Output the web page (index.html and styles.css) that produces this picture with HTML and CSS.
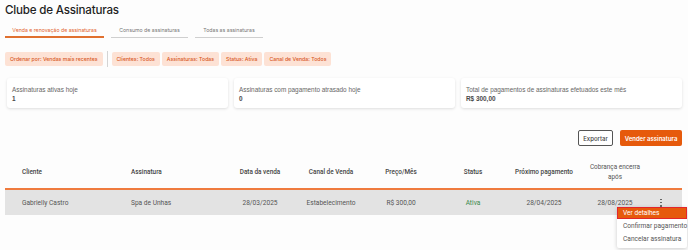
FILE: index.html
```html
<!DOCTYPE html>
<html lang="pt-BR">
<head>
<meta charset="utf-8">
<title>Clube de Assinaturas</title>
<link rel="stylesheet" href="styles.css">
</head>
<body>
<div class="page">
  <h1 class="title">Clube de Assinaturas</h1>

  <nav class="tabs">
    <a class="tab active">Venda e renovação de assinaturas</a>
    <a class="tab tab-2">Consumo de assinaturas</a>
    <a class="tab tab-3">Todas as assinaturas</a>
  </nav>

  <div class="chips">
    <span class="chip chip-sort">Ordenar por: Vendas mais recentes</span>
    <span class="chip-sep"></span>
    <span class="chip">Clientes: Todos</span>
    <span class="chip">Assinaturas: Todas</span>
    <span class="chip">Status: Ativa</span>
    <span class="chip">Canal de Venda: Todos</span>
  </div>

  <div class="cards">
    <div class="card">
      <div class="card-label">Assinaturas ativas hoje</div>
      <div class="card-value">1</div>
    </div>
    <div class="card">
      <div class="card-label">Assinaturas com pagamento atrasado hoje</div>
      <div class="card-value">0</div>
    </div>
    <div class="card">
      <div class="card-label">Total de pagamentos de assinaturas efetuados este mês</div>
      <div class="card-value">R$ 300,00</div>
    </div>
  </div>

  <div class="actions">
    <button class="btn btn-outline">Exportar</button>
    <button class="btn btn-primary">Vender assinatura</button>
  </div>

  <table class="table">
    <colgroup>
      <col class="c-cliente"><col class="c-assin"><col class="c-data"><col class="c-canal">
      <col class="c-preco"><col class="c-status"><col class="c-prox"><col class="c-cob"><col class="c-acao">
    </colgroup>
    <thead>
      <tr>
        <th class="left first">Cliente</th>
        <th class="left second">Assinatura</th>
        <th>Data da venda</th>
        <th>Canal de Venda</th>
        <th>Preço/Mês</th>
        <th>Status</th>
        <th>Próximo pagamento</th>
        <th class="cob">Cobrança encerra após</th>
        <th></th>
      </tr>
    </thead>
    <tbody>
      <tr>
        <td class="left first">Gabrielly Castro</td>
        <td class="left second">Spa de Unhas</td>
        <td>28/03/2025</td>
        <td>Estabelecimento</td>
        <td>R$ 300,00</td>
        <td class="status">Ativa</td>
        <td>28/04/2025</td>
        <td>28/08/2025</td>
        <td class="kebab-cell">
          <span class="kebab"><i></i><i></i><i></i></span>
          <div class="menu">
            <div class="menu-item selected">Ver detalhes</div>
            <div class="menu-item">Confirmar pagamento</div>
            <div class="menu-item">Cancelar assinatura</div>
          </div>
        </td>
      </tr>
    </tbody>
  </table>
</div>
</body>
</html>
```

FILE: styles.css
```css
* { box-sizing: border-box; }
html, body { margin: 0; padding: 0; }
body {
  background: #fdfdfd;
  font-family: "Liberation Sans", Arial, sans-serif;
  color: #333;
  width: 688px;
  height: 250px;
  overflow: hidden;
}
.page {
  padding: 2px 6px 0 5px;
}
.title {
  margin: 0;
  font-family: Inter, "Liberation Sans", sans-serif;
  font-weight: 500;
  font-size: 11.6px;
  letter-spacing: -0.2px;
  line-height: 16px;
  color: #1f1f1f;
}
.tabs {
  display: flex;
  gap: 7px;
  margin-top: 6px;
}
.tab {
  font-family: Inter, "Liberation Sans", sans-serif;
  font-size: 5.2px;
  color: #777;
  text-align: center;
  height: 14px;
  line-height: 13px;
  border-bottom: 1px solid #cfcfcf;
}
.tab.active {
  width: 99px;
  color: #e2622a;
  border-bottom: 2px solid #e0702f;
}
.tab-2 { width: 77px; }
.tab-3 { width: 68px; }

.chips {
  display: flex;
  align-items: center;
  gap: 2px;
  margin-top: 13px;
}
.chip {
  font-family: Inter, "Liberation Sans", sans-serif;
  font-weight: 500;
  font-size: 5.2px;
  color: #d8581f;
  background: #fde2d5;
  border-radius: 2px;
  height: 14px;
  line-height: 14px;
  padding: 0 5px;
  white-space: nowrap;
}
.chip-sep {
  width: 1px;
  height: 16px;
  background: #d4d4d4;
  margin: 0 2px;
}

.cards {
  display: flex;
  gap: 6px;
  margin-top: 11px;
  padding-left: 2px;
}
.card {
  flex: 1;
  height: 30px;
  background: #fff;
  border-radius: 3px;
  box-shadow: 0 1px 3px rgba(0,0,0,0.13);
  padding: 7px 5px 0;
}
.card-label {
  font-size: 6.4px;
  color: #666;
  line-height: 9px;
}
.card-value {
  font-size: 6.4px;
  font-weight: bold;
  color: #4a4a4a;
  line-height: 9px;
}

.actions {
  display: flex;
  justify-content: flex-end;
  gap: 7px;
  margin-top: 22px;
}
.btn {
  font-family: Inter, "Liberation Sans", sans-serif;
  font-size: 6px;
  height: 16px;
  padding: 0;
  border-radius: 2px;
  cursor: pointer;
}
.btn-outline {
  width: 35px;
  background: #fff;
  color: #444;
  border: 1px solid #555;
  font-weight: 500;
}
.btn-primary {
  width: 62px;
  background: #e65a0c;
  color: #fff;
  border: none;
  font-weight: 600;
}

.table {
  width: 677px;
  border-collapse: collapse;
  table-layout: fixed;
  margin-top: 12px;
  font-family: Roboto, "Liberation Sans", sans-serif;
}
.c-cliente { width: 110px; }
.c-assin { width: 110px; }
.c-data { width: 70px; }
.c-canal { width: 72px; }
.c-preco { width: 68px; }
.c-status { width: 76px; }
.c-prox { width: 66px; }
.c-cob { width: 76px; }
.c-acao { width: 29px; }

.table th {
  font-size: 6.4px;
  font-weight: 500;
  color: #444;
  text-align: center;
  height: 31px;
  padding: 0 2px 2px;
  line-height: 10px;
  border-bottom: 2px solid #ef7b3e;
}
.table th.cob { padding: 0 10px 2px; font-weight: 400; color: #555; }
.table td {
  font-size: 6.6px;
  color: #555;
  text-align: center;
  height: 26px;
  background: #e3e3e3;
  padding: 0 4px;
}
.table .left { text-align: left; }
.table .first { padding-left: 17px; }
.table .second { padding-left: 16px; }
.table td.status { color: #3a8a4c; }
.kebab-cell { position: relative; text-align: left !important; }
.kebab {
  display: inline-flex;
  flex-direction: column;
  gap: 1.5px;
  margin-left: 3px;
  vertical-align: middle;
}
.kebab i {
  display: block;
  width: 1.6px;
  height: 1.6px;
  border-radius: 50%;
  background: #555;
}
.menu {
  position: absolute;
  top: 17px;
  left: -36px;
  width: 70px;
  background: #fff;
  box-shadow: 0 1px 4px rgba(0,0,0,0.2);
  border-radius: 2px;
  padding-bottom: 2px;
  z-index: 5;
}
.menu-item {
  font-family: Roboto, "Liberation Sans", sans-serif;
  font-size: 6.6px;
  color: #555;
  line-height: 13px;
  padding-left: 6px;
  white-space: nowrap;
}
.menu-item.selected {
  background: #e65a0c;
  color: #fff;
  border: 1px solid #e3262b;
  line-height: 10px;
  padding-left: 5px;
  margin-bottom: 1px;
}
```
